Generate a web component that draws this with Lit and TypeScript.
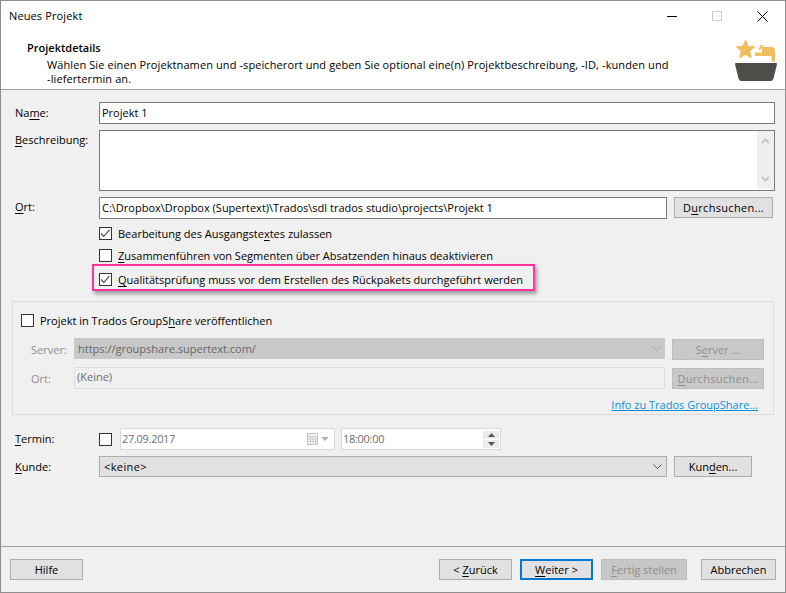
import { LitElement, html, css, svg } from "lit";
import { customElement } from "lit/decorators.js";

const chevron = (color: string) => html`<svg class="chev" width="9" height="5" viewBox="0 0 9 5"><path d="M.5.5l4 4 4-4" fill="none" stroke=${color}/></svg>`;

@customElement("app-root")
export class AppRoot extends LitElement {
  static styles = css`
    :host { display: block; width: 786px; height: 593px; font: 11px/16px "Open Sans", "Noto Sans", sans-serif; color: #000; }
    * { box-sizing: border-box; }
    u { text-underline-offset: 2px; text-decoration-thickness: 1px; }
    .window { height: 593px; border: 1px solid #8f8f8f; display: flex; flex-direction: column; background: #f0f0f0; }
    .head { height: 89px; background: #fff; border-bottom: 1px solid #a0a0a0; flex: none; }
    .titlebar { height: 30px; display: flex; align-items: center; justify-content: space-between; padding-left: 8px; letter-spacing: .12px; }
    .winctl { display: flex; align-items: center; gap: 35px; padding-right: 17px; }
    .winctl svg { display: block; }
    .section { display: flex; justify-content: space-between; padding: 8px 8px 0 26px; }
    .section b { display: block; font-weight: 600; line-height: 16px; margin-top: 1px; }
    .section p { margin: 2px 0 0 20px; line-height: 14px; letter-spacing: .095px; }
    .body { flex: 1; padding: 12px 0 0 14px; position: relative; }
    .row { display: flex; align-items: center; }
    .lbl { width: 84px; flex: none; }
    .lbl.dis { width: 43px; color: #8e8e8e; }
    .box { height: 22px; border: 1px solid #7a7a7a; background: #fff; padding: 0 2px; display: flex; align-items: center; white-space: nowrap; }
    .name { width: 676px; }
    .descr { width: 676px; height: 61px; display: flex; justify-content: flex-end; align-items: stretch; padding: 0 0 1px; }
    .scroll { width: 17px; background: #efefef; display: flex; flex-direction: column; justify-content: space-between; align-items: center; padding: 7px 0; }
    .scroll svg { display: block; }
    .top { align-items: flex-start; }
    .top .lbl { padding-top: 2px; }
    .rowdesc { margin-top: 6px; }
    .roword { margin-top: 6px; }
    .ort { width: 568px; }
    .btn { height: 21px; border: 1px solid #adadad; background: #e1e1e1; display: flex; align-items: center; justify-content: center; white-space: nowrap; flex: none; }
    .browse { width: 99px; margin-left: 7px; letter-spacing: .3px; align-self: flex-start; }
    .cbrow { display: flex; align-items: center; height: 13px; gap: 6px; margin-left: 84px; white-space: nowrap; }
    .cb { width: 13px; height: 13px; border: 1px solid #333; background: #fff; flex: none; display: block; }
    .c1 { margin-top: 8px; }
    .c2 { margin-top: 9px; }
    .c3 { margin-top: 11px; }
    .mark { position: absolute; left: 91px; top: 174px; width: 443px; height: 27px; border: 2px solid #ff3399; box-shadow: 2px 3px 4px rgba(0,0,0,.35); }
    .group { width: 762px; height: 114px; margin: 15px 0 0 -3px; border: 1px solid #dcdcdc; padding: 12px 0 0 8px; }
    .gcheck { display: flex; align-items: center; height: 13px; gap: 6px; }
    .grow { display: flex; align-items: flex-start; margin-left: 10px; }
    .grow .lbl { height: 21px; line-height: 24px; }
    .grow1 { margin-top: 11px; }
    .grow2 { margin-top: 7px; }
    .combo-dis { width: 591px; height: 21px; background: #c8c8c8; color: #666; display: flex; align-items: center; justify-content: space-between; padding: 0 4px; }
    .input-dis { width: 591px; height: 22px; border: 1px solid #dcdcdc; background: #f0f0f0; color: #6d6d6d; padding: 0 2px 2px; display: flex; align-items: center; }
    .btn-dis { width: 92px; height: 21px; margin: 1px 0 0 7px; background: #c8c8c8; border: 1px solid #bcbcbc; color: #8e8e8e; display: flex; align-items: center; justify-content: center; flex: none; }
    .btn-dis.wide { letter-spacing: .3px; }
    .linkrow { display: flex; justify-content: flex-end; margin: 8px 15px 0 0; }
    .link { color: #0a8fe0; text-decoration: underline; }
    .rowtermin { margin-top: 13px; }
    .date { width: 215px; height: 22px; margin-left: 8px; border: 1px solid #d9d9d9; background: #fff; color: #6d6d6d; padding: 0 1px 0 1px; display: flex; align-items: center; justify-content: space-between; letter-spacing: -.3px; }
    .dateicons { display: flex; align-items: center; gap: 3px; padding-right: 4px; }
    .time { width: 160px; height: 22px; margin-left: 6px; border: 1px solid #d9d9d9; background: #fff; color: #6d6d6d; padding: 0 1px 0 1px; display: flex; align-items: center; justify-content: space-between; letter-spacing: -.3px; }
    .spin { width: 16px; height: 17px; display: flex; flex-direction: column; gap: 1px; }
    .spin span { flex: 1; background: #ececec; display: flex; align-items: center; justify-content: center; }
    .rowkunde { margin-top: 6px; }
    .combo { width: 568px; height: 21px; background: #e1e1e1; border: 1px solid #adadad; display: flex; align-items: center; justify-content: space-between; padding: 0 4px; }
    .combo .val { letter-spacing: .4px; }
    .kunden { width: 78px; margin-left: 7px; }
    .foot { height: 46px; flex: none; border-top: 1px solid #a0a0a0; display: flex; align-items: flex-start; padding: 12px 9px 0 9px; }
    .foot .btn { width: 73px; }
    .spacer { flex: 1; }
    .foot .weiter { margin-left: 8px; border: 2px solid #0078d7; }
    .foot .fertig { margin-left: 8px; width: 86px; background: #c6c6c6; border-color: #bcbcbc; color: #8e8e8e; }
    .foot .abbr { margin-left: 14px; width: 75px; }
  `;

  private check(on: boolean) {
    return html`<svg class="cb" viewBox="0 0 11 11">
      ${on ? svg`<path d="M1 5.500 3.800 8.500 9.500 1.800" fill="none" stroke="#444" stroke-width="1.100"/>` : ""}
    </svg>`;
  }

  render() {
    return html`<div class="window">
      <div class="head">
        <div class="titlebar">
          <span>Neues Projekt</span>
          <div class="winctl">
            <svg width="10" height="10" viewBox="0 0 10 10"><path d="M0 5.500h10" stroke="#000"/></svg>
            <svg width="10" height="10" viewBox="0 0 10 10"><rect x=".5" y=".5" width="9" height="9" fill="none" stroke="#ccc"/></svg>
            <svg width="11" height="11" viewBox="0 0 11 11"><path d="M.5.5l10 10M10.500.5l-10 10" stroke="#000"/></svg>
          </div>
        </div>
        <div class="section">
          <div>
            <b>Projektdetails</b>
            <p>Wählen Sie einen Projektnamen und -speicherort und geben Sie optional eine(n) Projektbeschreibung, -ID, -kunden und<br>-liefertermin an.</p>
          </div>
          <svg width="42" height="43" viewBox="0 0 42 43">
            <path d="M10.500 0l3 6.800 7 .7-5.300 4.700 1.600 7.300-6.300-3.800-6.300 3.800 1.600-7.300L.5 7.500l7-.7z" fill="#eebd5d"/>
            <path d="M20 17v-3.500h7V8h9q4 0 4 4v10.500h-3.500V17z M23 10.500l3-4.500h2.500l-3 4.500z" fill="#eebd5d"/>
            <path d="M0 25q0-1 1-1h40q1 0 1 1l-3.500 14.500q-.7 2.500-3 2.500H6.500q-2.300 0-3-2.500z" fill="#4f4d4a"/>
          </svg>
        </div>
      </div>

      <div class="body">
        <div class="row"><span class="lbl">Na<u>m</u>e:</span><div class="box name"><span>Projekt 1</span></div></div>
        <div class="row top rowdesc"><span class="lbl"><u>B</u>eschreibung:</span>
          <div class="box descr"><div class="scroll">
            <svg width="9" height="6" viewBox="0 0 9 6"><path d="M1 5 4.500 1.500 8 5" fill="none" stroke="#c4c4c4" stroke-width="2"/></svg>
            <svg width="9" height="6" viewBox="0 0 9 6"><path d="M1 1l3.500 3.500L8 1" fill="none" stroke="#c4c4c4" stroke-width="2"/></svg>
          </div></div>
        </div>
        <div class="row top roword"><span class="lbl"><u>O</u>rt:</span>
          <div class="box ort"><span>C:\\Dropbox\\Dropbox (Supertext)\\Trados\\sdl trados studio\\projects\\Projekt 1</span></div>
          <div class="btn browse"><span>D<u>u</u>rchsuchen...</span></div>
        </div>
        <div class="cbrow c1">${this.check(true)}<span>Bearbeitung des Ausgangste<u>x</u>tes zulassen</span></div>
        <div class="cbrow c2">${this.check(false)}<span><u>Z</u>usammenführen von Segmenten über Absatzenden hinaus deaktivieren</span></div>
        <div class="cbrow c3">${this.check(true)}<span><u>Q</u>ualitätsprüfung muss vor dem Erstellen des Rückpakets durchgeführt werden</span></div>
        <div class="mark"></div>

        <div class="group">
          <div class="gcheck">${this.check(false)}<span>Projekt in Trados GroupS<u>h</u>are veröffentlichen</span></div>
          <div class="grow grow1"><span class="lbl dis">Server:</span>
            <div class="combo-dis"><span>https://groupshare.supertext.com/</span>${chevron("#a8a8a8")}</div>
            <div class="btn-dis"><span>S<u>e</u>rver ...</span></div>
          </div>
          <div class="grow grow2"><span class="lbl dis">Ort:</span>
            <div class="input-dis"><span>(Keine)</span></div>
            <div class="btn-dis wide"><span><u>D</u>urchsuchen...</span></div>
          </div>
          <div class="linkrow"><span class="link">Info zu Trados GroupShare...</span></div>
        </div>

        <div class="row rowtermin"><span class="lbl"><u>T</u>ermin:</span>
          ${this.check(false)}
          <div class="date"><span>27.09.2017</span>
            <span class="dateicons">
              <svg width="11" height="12" viewBox="0 0 11 12"><rect x=".5" y=".5" width="10" height="11" fill="#f4f4f4" stroke="#c4c4c4"/><path d="M1 3.500h9M1 6h9M1 8.500h9M3.500 3v8M6 3v8M8.500 3v8" stroke="#d0d0d0"/></svg>
              <svg width="8" height="4" viewBox="0 0 8 4"><path d="M0 0h8L4 4z" fill="#b5b5b5"/></svg>
            </span>
          </div>
          <div class="time"><span>18:00:00</span>
            <div class="spin">
              <span><svg width="7" height="4" viewBox="0 0 7 4"><path d="M0 4h7L3.500 0z" fill="#555"/></svg></span>
              <span><svg width="7" height="4" viewBox="0 0 7 4"><path d="M0 0h7L3.500 4z" fill="#555"/></svg></span>
            </div>
          </div>
        </div>
        <div class="row rowkunde"><span class="lbl"><u>K</u>unde:</span>
          <div class="combo"><span class="val">&lt;keine&gt;</span>${chevron("#555")}</div>
          <div class="btn kunden"><span>Kun<u>d</u>en...</span></div>
        </div>
      </div>

      <div class="foot">
        <div class="btn"><span>Hilfe</span></div>
        <div class="spacer"></div>
        <div class="btn"><span>&lt; <u>Z</u>urück</span></div>
        <div class="btn weiter"><span><u>W</u>eiter &gt;</span></div>
        <div class="btn fertig"><span><u>F</u>ertig stellen</span></div>
        <div class="btn abbr"><span>Abbrechen</span></div>
      </div>
    </div>`;
  }
}
